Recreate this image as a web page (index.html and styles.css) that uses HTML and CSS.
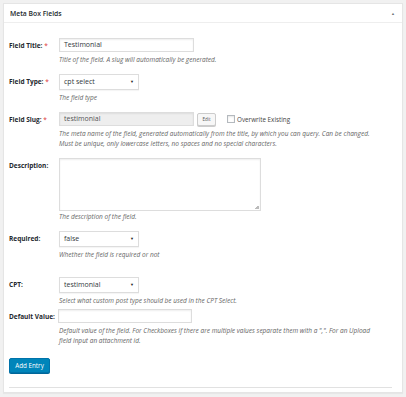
FILE: index.html
```html
<!DOCTYPE html>
<html>
<head>
<meta charset="utf-8">
<link rel="stylesheet" href="styles.css">
</head>
<body>
<div class="postbox">
  <div class="hndle">
    <span class="title">Meta Box Fields</span>
    <span class="toggle">▲</span>
  </div>
  <div class="inside">
    <div class="row">
      <div class="label">Field Title: <span class="req">*</span></div>
      <div class="field">
        <div class="input">Testimonial</div>
        <p class="desc">Title of the field. A slug will automatically be generated.</p>
      </div>
    </div>
    <div class="row">
      <div class="label">Field Type: <span class="req">*</span></div>
      <div class="field">
        <div class="select">cpt select<span class="caret">▼</span></div>
        <p class="desc">The field type</p>
      </div>
    </div>
    <div class="row">
      <div class="label">Field Slug: <span class="req">*</span></div>
      <div class="field">
        <div class="slug-line">
          <div class="input disabled">testimonial</div>
          <div class="edit-btn">Edit</div>
          <div class="checkbox"></div>
          <span class="cb-label">Overwrite Existing</span>
        </div>
        <p class="desc">The meta name of the field, generated automatically from the title, by which you can query. Can be changed. Must be unique, only lowercase letters, no spaces and no special characters.</p>
      </div>
    </div>
    <div class="row">
      <div class="label">Description:</div>
      <div class="field">
        <div class="textarea"><span class="grip"></span></div>
        <p class="desc tight">The description of the field.</p>
      </div>
    </div>
    <div class="row">
      <div class="label">Required:</div>
      <div class="field">
        <div class="select">false<span class="caret">▼</span></div>
        <p class="desc">Whether the field is required or not</p>
      </div>
    </div>
    <div class="row cpt">
      <div class="label">CPT:</div>
      <div class="field">
        <div class="select">testimonial<span class="caret">▼</span></div>
        <p class="desc">Select what custom post type should be used in the CPT Select.</p>
      </div>
    </div>
    <div class="row">
      <div class="label">Default Value:</div>
      <div class="field">
        <div class="input short"></div>
        <p class="desc">Default value of the field. For Checkboxes if there are multiple values separate them with a ",". For an Upload field input an attachment id.</p>
      </div>
    </div>
    <div class="actions">
      <div class="button-primary">Add Entry</div>
    </div>
    <div class="divider"></div>
  </div>
</div>
</body>
</html>
```

FILE: styles.css
```css
* { box-sizing: border-box; }
html, body { margin: 0; }
body {
  background: #f1f1f1;
  padding: 3px 3px 4px 3px;
  font-family: "Open Sans", "Noto Sans", sans-serif;
  color: #23282d;
}
.postbox {
  background: #fff;
  border: 1px solid #e5e5e5;
  box-shadow: 0 1px 1px rgba(0,0,0,0.04);
  height: 390px;
}
.hndle {
  height: 19px;
  border-bottom: 1px solid #eee;
  display: flex;
  align-items: center;
  justify-content: space-between;
  padding: 0 7px 0 6px;
}
.title {
  font-size: 6.8px;
  font-weight: 600;
}
.toggle {
  font-size: 4px;
  color: #72777c;
}
.inside {
  padding: 15px 7px 0 5px;
}
.row {
  display: grid;
  grid-template-columns: 50px 1fr;
  margin-bottom: 9px;
}
.row.cpt { padding-top: 8px; margin-bottom: 3px; }
.label {
  font-size: 6.5px;
  font-weight: 700;
  padding-top: 3px;
  white-space: nowrap;
}
.req { color: #dc3232; font-weight: 400; }
.field { min-width: 0; }
.input {
  width: 135px;
  height: 14px;
  border: 1px solid #ddd;
  box-shadow: inset 0 1px 2px rgba(0,0,0,0.07);
  font-size: 7px;
  line-height: 12px;
  padding: 0 4px;
  color: #32373c;
}
.input.short { width: 134px; margin-left: -1px; }
.input.disabled { background: #eee; color: #555; }
.select {
  width: 80px;
  height: 16px;
  border: 1px solid #ddd;
  box-shadow: 0 1px 1px rgba(0,0,0,0.04);
  font-size: 7px;
  line-height: 14px;
  padding: 0 4px;
  display: flex;
  justify-content: space-between;
  color: #32373c;
}
.caret { font-size: 4px; color: #222; }
.desc {
  margin: 3px 0 0 0;
  font-size: 6.5px;
  line-height: 10px;
  font-style: italic;
  color: #666;
  max-width: 320px;
}
.desc.tight { margin-top: 1px; }
.slug-line {
  display: flex;
  align-items: center;
}
.edit-btn {
  margin-left: 3px;
  width: 19px;
  height: 13px;
  border: 1px solid #ccc;
  border-radius: 2px;
  background: #f7f7f7;
  box-shadow: 0 1px 0 #ccc;
  font-size: 4.5px;
  line-height: 11px;
  text-align: center;
  color: #555;
}
.checkbox {
  margin-left: 11px;
  width: 8px;
  height: 8px;
  border: 1px solid #b4b9be;
  box-shadow: inset 0 1px 2px rgba(0,0,0,0.1);
}
.cb-label {
  margin-left: 2px;
  font-size: 6.3px;
  color: #444;
}
.textarea {
  position: relative;
  width: 202px;
  height: 53px;
  border: 1px solid #ddd;
  box-shadow: inset 0 1px 2px rgba(0,0,0,0.07);
}
.grip {
  position: absolute;
  right: 1px;
  bottom: 1px;
  width: 4px;
  height: 4px;
  background: linear-gradient(135deg, transparent 50%, #bbb 50%);
}
.actions { padding: 3px 0 0 0; }
.button-primary {
  width: 41px;
  height: 15px;
  background: #0085ba;
  border: 1px solid #0073aa;
  border-radius: 2px;
  box-shadow: 0 1px 0 #006799;
  color: #fff;
  font-size: 6.3px;
  line-height: 13px;
  text-align: center;
}
.divider {
  margin: 14px 3px 0 0;
  height: 1px;
  background: #e1e1e1;
}
```
